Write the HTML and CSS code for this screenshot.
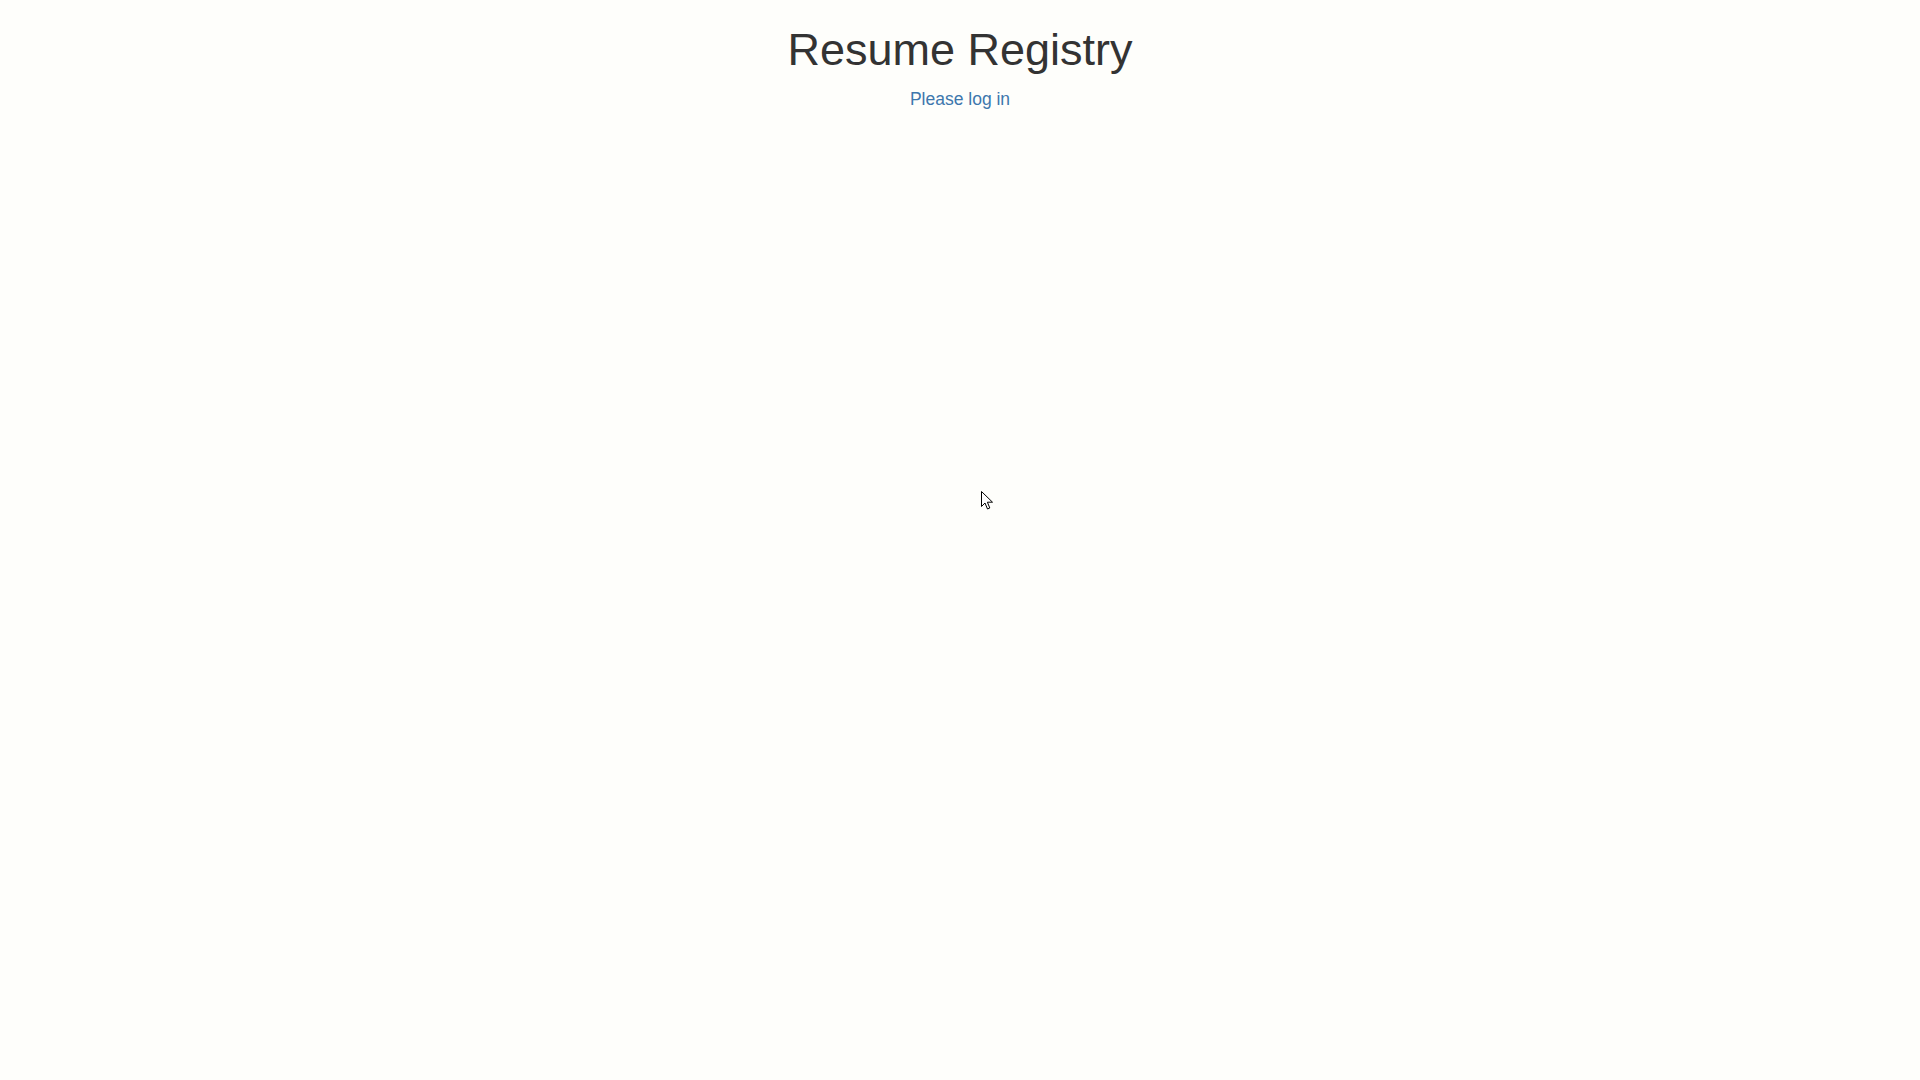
FILE: index.html
```html
<!DOCTYPE html>
<html lang="en">
<head>
<meta charset="utf-8">
<title>Resume Registry</title>
<link rel="stylesheet" href="styles.css">
</head>
<body>
<div class="container">
  <h1 class="title">Resume Registry</h1>
  <p class="login"><a href="#">Please log in</a></p>
</div>
<svg class="cursor" width="13" height="20" viewBox="0 0 13 20" aria-hidden="true">
  <path d="M0.5 0.5 L0.5 15.5 L4 12 L6.5 18 L8.8 17 L6.4 11.2 L11.5 11.2 Z" fill="#fff" stroke="#000" stroke-width="1" stroke-linejoin="miter"/>
</svg>
</body>
</html>
```
FILE: styles.css
```css
html, body {
  margin: 0;
  padding: 0;
}
body {
  background: #fefefb;
  font-family: "Liberation Sans", Arial, sans-serif;
  color: #333;
  min-height: 1080px;
}
.container {
  text-align: center;
  padding-top: 25px;
}
.title {
  margin: 0 0 12px;
  font-size: 45px;
  font-weight: 400;
  line-height: 1.1;
  color: #333;
}
.login {
  margin: 0;
  font-size: 17.5px;
  line-height: 25px;
}
.login a {
  color: #3d77ad;
  text-decoration: none;
}
.cursor {
  position: absolute;
  left: 981px;
  top: 491px;
}
```
